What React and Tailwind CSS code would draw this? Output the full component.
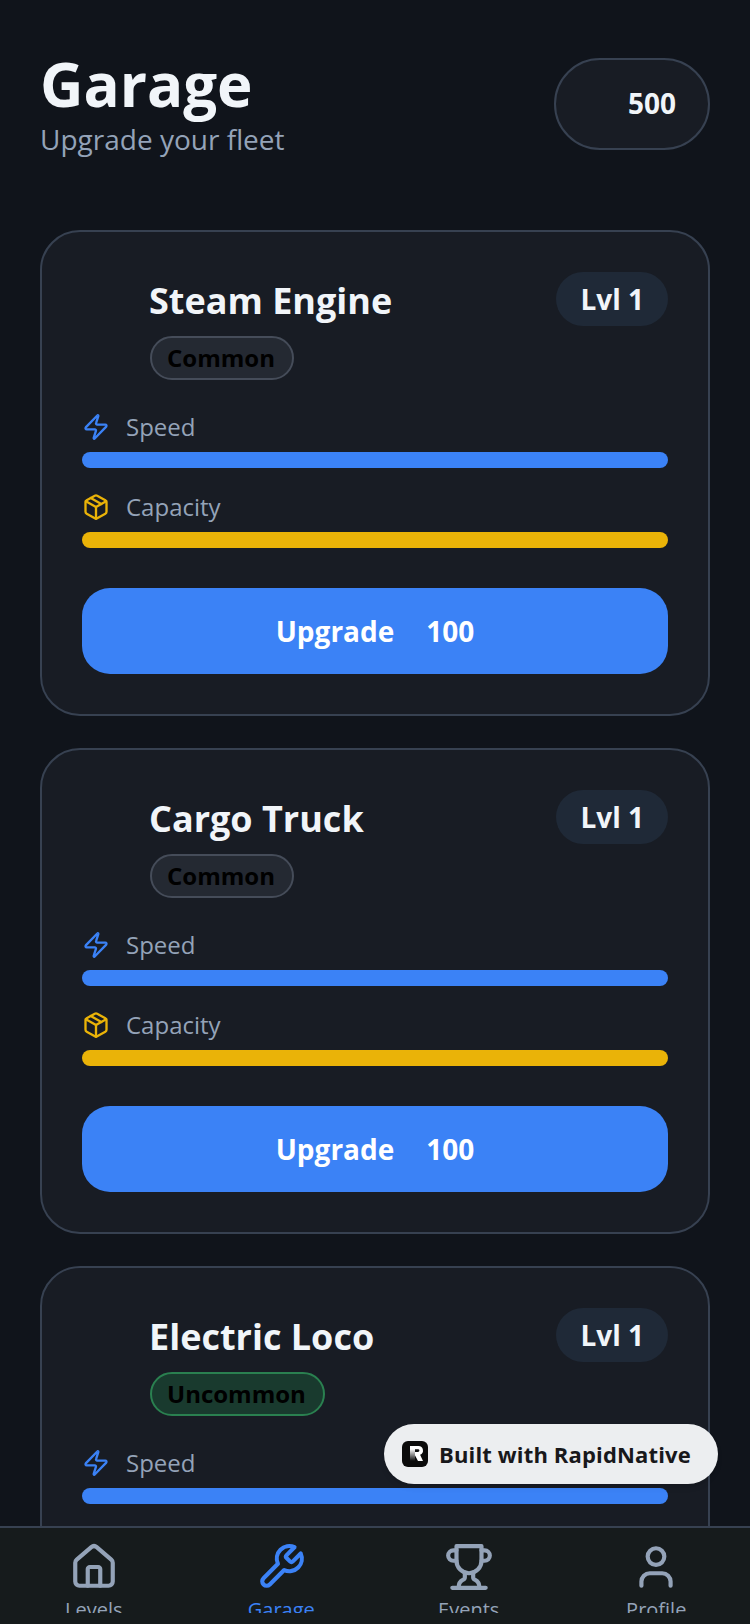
import React from "react";
import { Zap, Package, House, User } from "lucide-react";

const trains = [
  { name: "Steam Engine", rarity: "Common", chip: "bg-[#242932] border-[#454c59]" },
  { name: "Cargo Truck", rarity: "Common", chip: "bg-[#242932] border-[#454c59]" },
  { name: "Electric Loco", rarity: "Uncommon", chip: "bg-[#193a2e] border-[#2a8050]" },
];

const TabIcon = ({ children }) => (
  <svg width="50" height="50" viewBox="0 0 24 24" fill="none" stroke="currentColor" strokeWidth="2" strokeLinecap="round" strokeLinejoin="round" className="shrink-0">
    {children}
  </svg>
);

const HomeIcon = () => <House size={50} strokeWidth={2} className="shrink-0" />;

const WrenchIcon = () => (
  <TabIcon>
    <path d="M14.7 6.3a1 1 0 0 0 0 1.4l1.6 1.6a1 1 0 0 0 1.4 0l3.77-3.77a6 6 0 0 1-7.94 7.94l-6.91 6.91a2.12 2.12 0 0 1-3-3l6.91-6.91a6 6 0 0 1 7.94-7.94l-3.76 3.76z" />
  </TabIcon>
);

const TrophyIcon = () => (
  <TabIcon>
    <path d="M6 9H4.5a2.5 2.5 0 0 1 0-5H6" />
    <path d="M18 9h1.5a2.5 2.5 0 0 0 0-5H18" />
    <path d="M4 22h16" />
    <path d="M10 14.66V17c0 .55-.47.98-.97 1.21C7.85 18.75 7 20.24 7 22" />
    <path d="M14 14.66V17c0 .55.47.98.97 1.21C16.15 18.75 17 20.24 17 22" />
    <path d="M18 2H6v7a6 6 0 0 0 12 0V2Z" />
  </TabIcon>
);

const ProfileIcon = () => <User size={50} strokeWidth={2} className="shrink-0" />;

const tabs = [
  { label: "Levels", Icon: HomeIcon },
  { label: "Garage", Icon: WrenchIcon, active: true },
  { label: "Events", Icon: TrophyIcon },
  { label: "Profile", Icon: ProfileIcon },
];

const Stat = ({ Icon, label, iconClass, barClass }) => (
  <div className="flex flex-col gap-2">
    <div className="flex items-center gap-4 h-[34px]">
      <Icon size={28} strokeWidth={2} className={iconClass} />
      <span className="text-[24px] leading-[34px] text-[#94a3b8]">{label}</span>
    </div>
    <div className={`h-4 rounded-full ${barClass}`} />
  </div>
);

const TrainCard = ({ train }) => (
  <div className="shrink-0 h-[486px] rounded-[40px] border-2 border-[#374151] bg-[#181c24] p-10">
    <div className="flex justify-between items-start">
      <div className="ml-[67px] flex flex-col items-start gap-[6px]">
        <h2 className="text-[36px] leading-[58px] font-bold text-[#f1f5f9]">{train.name}</h2>
        <span className={`ml-px rounded-full border-2 pl-[15px] pr-[17px] h-[44px] flex items-center text-[24px] font-bold text-black ${train.chip}`}>
          {train.rarity}
        </span>
      </div>
      <div className="rounded-full bg-[#1f2937] px-6 h-[54px] flex items-center text-[28px] font-bold text-[#f1f5f9]">
        Lvl 1
      </div>
    </div>
    <div className="mt-[30px] flex flex-col gap-[22px]">
      <Stat Icon={Zap} label="Speed" iconClass="text-[#3b82f6]" barClass="bg-[#3b82f6]" />
      <Stat Icon={Package} label="Capacity" iconClass="text-[#eab308]" barClass="bg-[#eab308]" />
    </div>
    <button className="mt-10 w-full h-[86px] rounded-[28px] bg-[#3b82f6] flex items-center justify-center gap-8 text-[28px] font-bold text-white">
      <span>Upgrade</span>
      <span>100</span>
    </button>
  </div>
);

export default function App() {
  return (
    <div className="relative w-[750px] h-[1624px] overflow-hidden flex flex-col bg-[#10141b] font-['Open_Sans',sans-serif]">
      <div className="flex-1 min-h-0 overflow-hidden px-10 pt-[48px]">
        <header className="flex justify-between items-start">
          <div className="flex flex-col">
            <h1 className="text-[60px] leading-[72px] font-bold text-[#f1f5f9]">Garage</h1>
            <p className="text-[28px] leading-[38px] text-[#94a3b8]">Upgrade your fleet</p>
          </div>
          <div className="mt-[10px] w-[156px] h-[92px] rounded-full border-2 border-[#374151] bg-[#181c24] flex items-center justify-end pr-8 text-[28px] font-bold text-[#f1f5f9]">
            <span className="-mt-[2px]">500</span>
          </div>
        </header>
        <div className="mt-[72px] flex flex-col gap-8">
          {trains.map((train) => (
            <TrainCard key={train.name} train={train} />
          ))}
        </div>
      </div>

      <nav className="shrink-0 h-[98px] border-t-2 border-[#374151] bg-[#161b1c] grid grid-cols-4">
        {tabs.map(({ label, Icon, active }) => (
          <div key={label} className={`h-[85px] flex flex-col items-center pt-[14px] overflow-hidden ${active ? "text-[#3b82f6]" : "text-[#94a3b8]"}`}>
            <Icon />
            <span className="mt-[1px] text-[20px] leading-[34px]">{label}</span>
          </div>
        ))}
      </nav>

      <div className="absolute left-[384px] top-[1424px] w-[334px] h-[60px] rounded-full bg-[#eceef0] flex items-center gap-[11px] pl-[18px] shadow-md">
        <svg width="26" height="26" viewBox="0 0 26 26" className="shrink-0">
          <defs>
            <linearGradient id="rn-stem" x1="0" y1="0" x2="0" y2="1">
              <stop offset="0" stopColor="#fff" />
              <stop offset="1" stopColor="#fff" stopOpacity="0" />
            </linearGradient>
          </defs>
          <rect width="26" height="26" rx="6" fill="#0b0b0b" />
          <path d="M8 5h8.5a4.5 4.5 0 0 1 1.6 8.7L21 20h-5l-3.2-6H13v-3h3a1.4 1.4 0 0 0 0-2.8H8z" fill="#fff" />
          <rect x="8" y="8" width="5" height="12" fill="url(#rn-stem)" />
        </svg>
        <span className="text-[22px] font-bold tracking-[0.15px] text-[#18181b]">Built with RapidNative</span>
      </div>
    </div>
  );
}
